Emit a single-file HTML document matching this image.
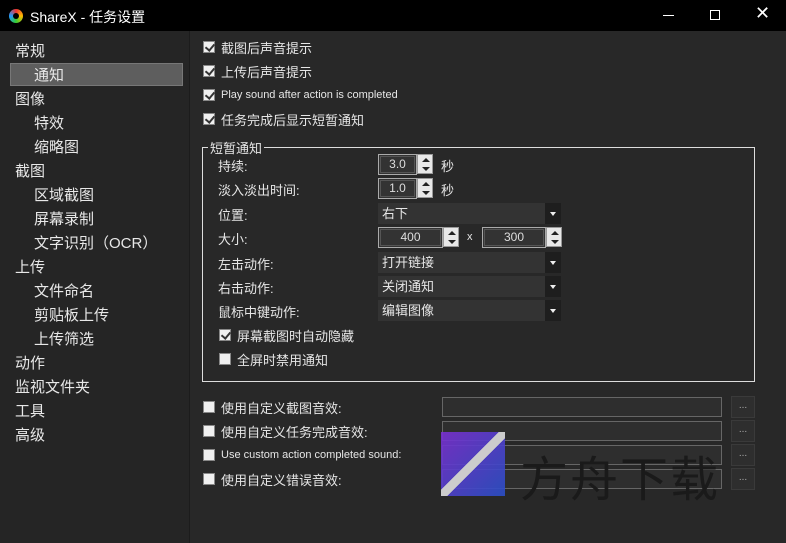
<!DOCTYPE html>
<html><head><meta charset="utf-8"><style>
*{box-sizing:border-box;margin:0;padding:0}
body{width:786px;height:543px;background:#282828;font-family:"Liberation Sans","Noto Sans CJK SC",sans-serif;color:#e6e6e6;position:relative;overflow:hidden;font-size:13px}
.a{position:absolute;white-space:nowrap}
.title{left:0;top:0;width:786px;height:31px;background:#000}
.left{left:0;top:31px;width:190px;height:512px;background:#252525;border-right:1px solid #1c1c1c}
.tv{font-size:15px;color:#e8e8e8}
.cb{width:12px;height:12px;background:#f0f0f0;border:1px solid #888}
.cb.on::after{content:"";position:absolute;left:3px;top:0px;width:4px;height:7px;border:solid #333;border-width:0 2px 2px 0;transform:rotate(40deg)}
.num{border:1px solid #aaa;background:#333;outline:1px solid #555;outline-offset:-3px;text-align:center;font-size:12px;color:#ddd;line-height:18px}
.spin{background:#e8e8e8;border:1px solid #999;width:16px;height:20px}
.spin::before{content:"";position:absolute;left:4px;top:3px;border:4px solid transparent;border-bottom:4px solid #222;border-top:0}
.spin::after{content:"";position:absolute;left:4px;top:12px;border:4px solid transparent;border-top:4px solid #222;border-bottom:0}
.combo{background:#333;height:21px;width:183px;font-size:13px;line-height:21px;padding-left:4px}
.combo::after{content:"";position:absolute;right:0;top:0;width:16px;height:21px;background:#1e1e1e}
.combo i{position:absolute;right:5px;top:9px;border:3px solid transparent;border-top:4px solid #eee;z-index:2}
.tb{border:1px solid #666;background:#2e2e2e;height:20px;width:280px}
.btn{background:#2e2e2e;border:1px solid #3a3a3a;width:24px;height:22px;font-size:10px;text-align:center;line-height:18px;color:#aaa}
</style></head><body>
<div class="a title"></div>
<div class="a" style="left:9px;top:9px;width:14px;height:14px;border-radius:50%;background:conic-gradient(#e33,#fb0,#3c3,#29f,#e33)"></div>
<div class="a" style="left:13px;top:13px;width:6px;height:6px;border-radius:50%;background:#000"></div>
<div class="a" style="left:30px;top:7px;font-size:14px;color:#fff">ShareX - 任务设置</div>
<div class="a" style="left:663px;top:15px;width:11px;height:1px;background:#fff"></div>
<div class="a" style="left:710px;top:10px;width:10px;height:10px;border:1px solid #fff"></div>
<div class="a" style="left:755px;top:3px;font-size:18px;color:#fff">✕</div>
<div class="a left"></div>
<div class="a" style="left:10px;top:63px;width:173px;height:23px;background:#5e5e5e;border:1px solid #777"></div>
<div class="a tv" style="left:15px;top:40px">常规</div>
<div class="a tv" style="left:34px;top:64px">通知</div>
<div class="a tv" style="left:15px;top:88px">图像</div>
<div class="a tv" style="left:34px;top:112px">特效</div>
<div class="a tv" style="left:34px;top:136px">缩略图</div>
<div class="a tv" style="left:15px;top:160px">截图</div>
<div class="a tv" style="left:34px;top:184px">区域截图</div>
<div class="a tv" style="left:34px;top:208px">屏幕录制</div>
<div class="a tv" style="left:34px;top:232px">文字识别（OCR）</div>
<div class="a tv" style="left:15px;top:256px">上传</div>
<div class="a tv" style="left:34px;top:280px">文件命名</div>
<div class="a tv" style="left:34px;top:304px">剪贴板上传</div>
<div class="a tv" style="left:34px;top:328px">上传筛选</div>
<div class="a tv" style="left:15px;top:352px">动作</div>
<div class="a tv" style="left:15px;top:376px">监视文件夹</div>
<div class="a tv" style="left:15px;top:400px">工具</div>
<div class="a tv" style="left:15px;top:424px">高级</div>

<div class="a cb on" style="left:203px;top:41px"></div><div class="a" style="left:221px;top:38px">截图后声音提示</div>
<div class="a cb on" style="left:203px;top:65px"></div><div class="a" style="left:221px;top:62px">上传后声音提示</div>
<div class="a cb on" style="left:203px;top:89px"></div><div class="a" style="left:221px;top:88px;font-size:11px;line-height:14px">Play sound after action is completed</div>
<div class="a cb on" style="left:203px;top:113px"></div><div class="a" style="left:221px;top:110px">任务完成后显示短暂通知</div>

<div class="a" style="left:202px;top:147px;width:553px;height:235px;border:1px solid #ddd"></div>
<div class="a" style="left:208px;top:138px;background:#282828;padding:0 2px">短暂通知</div>
<div class="a" style="left:218px;top:156px">持续:</div>
<div class="a" style="left:218px;top:180px">淡入淡出时间:</div>
<div class="a" style="left:218px;top:205px">位置:</div>
<div class="a" style="left:218px;top:229px">大小:</div>
<div class="a" style="left:218px;top:254px">左击动作:</div>
<div class="a" style="left:218px;top:278px">右击动作:</div>
<div class="a" style="left:218px;top:302px">鼠标中键动作:</div>
<div class="a num" style="left:378px;top:154px;width:39px;height:21px">3.0</div><div class="a spin" style="left:417px;top:154px"></div><div class="a" style="left:441px;top:156px">秒</div>
<div class="a num" style="left:378px;top:178px;width:39px;height:21px">1.0</div><div class="a spin" style="left:417px;top:178px"></div><div class="a" style="left:441px;top:180px">秒</div>
<div class="a combo" style="left:378px;top:203px">右下<i></i></div>
<div class="a num" style="left:378px;top:227px;width:65px;height:21px">400</div><div class="a spin" style="left:443px;top:227px"></div>
<div class="a" style="left:467px;top:231px;font-size:11px">x</div>
<div class="a num" style="left:482px;top:227px;width:64px;height:21px">300</div><div class="a spin" style="left:546px;top:227px"></div>
<div class="a combo" style="left:378px;top:252px">打开链接<i></i></div>
<div class="a combo" style="left:378px;top:276px">关闭通知<i></i></div>
<div class="a combo" style="left:378px;top:300px">编辑图像<i></i></div>
<div class="a cb on" style="left:219px;top:329px"></div><div class="a" style="left:237px;top:326px">屏幕截图时自动隐藏</div>
<div class="a cb" style="left:219px;top:353px"></div><div class="a" style="left:237px;top:350px">全屏时禁用通知</div>

<div class="a cb" style="left:203px;top:401px"></div><div class="a" style="left:221px;top:398px">使用自定义截图音效:</div>
<div class="a cb" style="left:203px;top:425px"></div><div class="a" style="left:221px;top:422px">使用自定义任务完成音效:</div>
<div class="a cb" style="left:203px;top:449px"></div><div class="a" style="left:221px;top:448px;font-size:11px;line-height:14px">Use custom action completed sound:</div>
<div class="a cb" style="left:203px;top:473px"></div><div class="a" style="left:221px;top:470px">使用自定义错误音效:</div>
<div class="a tb" style="left:442px;top:397px"></div><div class="a btn" style="left:731px;top:396px">...</div>
<div class="a tb" style="left:442px;top:421px"></div><div class="a btn" style="left:731px;top:420px">...</div>
<div class="a tb" style="left:442px;top:445px"></div><div class="a btn" style="left:731px;top:444px">...</div>
<div class="a tb" style="left:442px;top:469px"></div><div class="a btn" style="left:731px;top:468px">...</div>
<div class="a" style="left:441px;top:432px;width:64px;height:64px;background:linear-gradient(135deg,#7a2fd0,#2a4fc8);opacity:.9"></div>
<div class="a" style="left:441px;top:432px;width:64px;height:64px;background:linear-gradient(45deg,transparent 45%,#ccc 45%,#ccc 55%,transparent 55%);transform:scaleX(-1)"></div>
<div class="a" style="left:520px;top:440px;font-size:48px;color:#1a1a1a;letter-spacing:2px">方舟下载</div>
</body></html>
